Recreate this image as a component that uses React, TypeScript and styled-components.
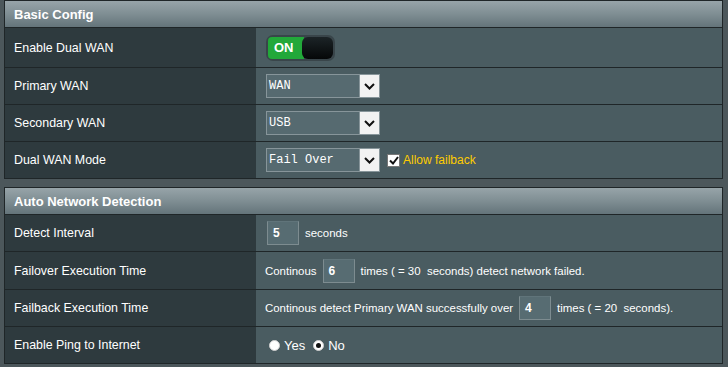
import styled, { createGlobalStyle } from 'styled-components';

const GlobalStyle = createGlobalStyle`
  html, body {
    margin: 0;
    padding: 0;
    background: #4c575b;
    font-family: "Liberation Sans", Arial, sans-serif;
  }
`;

const Page = styled.div`
  padding: 0 5px 0 4px;
  display: flex;
  flex-direction: column;
  gap: 8px;
`;

const Section = styled.section`
  border: 1px solid #1f2628;
  display: flex;
  flex-direction: column;
`;

const Header = styled.div`
  height: 26px;
  display: flex;
  align-items: center;
  padding-left: 9px;
  background: linear-gradient(to bottom, #97a4a9 0%, #7f8e93 50%, #64747a 100%);
  color: #ffffff;
  font-size: 13px;
  font-weight: bold;
  border-bottom: 1px solid #1f2628;
`;

const Row = styled.div<{ $h?: number; $last?: boolean }>`
  display: grid;
  grid-template-columns: 251px 1fr;
  height: ${p => p.$h ?? 36}px;
  border-bottom: ${p => (p.$last ? 'none' : '1px solid #1f2628')};
`;

const Label = styled.div`
  background: #2e3a3e;
  color: #ffffff;
  font-size: 12.4px;
  display: flex;
  align-items: center;
  padding-left: 9px;
`;

const Value = styled.div`
  background: #4a5c61;
  color: #ffffff;
  font-size: 11.45px;
  display: flex;
  align-items: center;
  padding-left: 9px;
  white-space: pre;
`;

const Toggle = styled.div`
  width: 69px;
  height: 26px;
  margin-left: 1px;
  box-sizing: border-box;
  border-radius: 7px;
  background: #39454a;
  padding: 2px;
  display: flex;
`;

const ToggleOn = styled.div`
  width: 36px;
  background: #22a83a;
  border-radius: 4px 0 0 4px;
  color: #fff;
  font-weight: bold;
  font-size: 13px;
  display: flex;
  align-items: center;
  padding-left: 6px;
  box-sizing: border-box;
`;

const ToggleKnob = styled.div`
  flex: 1;
  background: linear-gradient(to bottom, #1c2427, #050708);
  border-radius: 6px;
  margin-left: -2px;
`;

const Select = styled.div`
  width: 114px;
  height: 24px;
  margin-left: 1px;
  box-sizing: border-box;
  border: 1px solid #87959a;
  background: #566a70;
  display: flex;
  align-items: stretch;
`;

const SelectText = styled.span`
  flex: 1;
  display: flex;
  align-items: center;
  padding-left: 2px;
  font-family: "Liberation Mono", "Courier New", monospace;
  font-size: 12px;
  color: #ffffff;
`;

const Arrow = styled.span`
  width: 19px;
  background: #f2f2f2;
  border-left: 1px solid #87959a;
  display: flex;
  align-items: center;
  justify-content: center;
`;

const Check = styled.span`
  width: 11px;
  height: 11px;
  margin: 0 3px 0 7px;
  background: #ffffff;
  border: 1px solid #777;
  display: flex;
  align-items: center;
  justify-content: center;
`;

const Yellow = styled.span`
  color: #ffcc00;
  font-size: 12px;
`;

const NumBox = styled.span<{ $first?: boolean }>`
  width: 32px;
  height: 24px;
  box-sizing: border-box;
  border: 1px solid #7d8c90;
  border-top-color: #60747a;
  background: #576c72;
  color: #fff;
  font-weight: bold;
  font-size: 12px;
  display: inline-flex;
  align-items: center;
  padding-left: 5px;
  margin: 0 6px 0 ${p => (p.$first ? 2 : 6)}px;
`;

const Radio = styled.span<{ $on?: boolean }>`
  width: 11px;
  height: 11px;
  border-radius: 50%;
  background: #ffffff;
  border: 1px solid #d0d0d0;
  box-sizing: border-box;
  display: inline-flex;
  align-items: center;
  justify-content: center;
  margin: 0 4px 0 4px;

  &::after {
    content: '';
    width: 5px;
    height: 5px;
    border-radius: 50%;
    background: ${p => (p.$on ? '#111' : 'transparent')};
  }
`;

const RadioText = styled.span`
  font-size: 13px;
  margin-right: 4px;
`;

const Chevron = () => (
  <svg width="11" height="7" viewBox="0 0 11 7">
    <path d="M1 1 L5.5 5.5 L10 1" fill="none" stroke="#111" strokeWidth="2" />
  </svg>
);

const Dropdown = ({ value }: { value: string }) => (
  <Select>
    <SelectText>{value}</SelectText>
    <Arrow>
      <Chevron />
    </Arrow>
  </Select>
);

export default function App() {
  return (
    <Page>
      <GlobalStyle />
      <Section>
        <Header>Basic Config</Header>
        <Row $h={39}>
          <Label>Enable Dual WAN</Label>
          <Value>
            <Toggle>
              <ToggleOn>ON</ToggleOn>
              <ToggleKnob />
            </Toggle>
          </Value>
        </Row>
        <Row>
          <Label>Primary WAN</Label>
          <Value>
            <Dropdown value="WAN" />
          </Value>
        </Row>
        <Row>
          <Label>Secondary WAN</Label>
          <Value>
            <Dropdown value="USB" />
          </Value>
        </Row>
        <Row $last>
          <Label>Dual WAN Mode</Label>
          <Value>
            <Dropdown value="Fail Over" />
            <Check>
              <svg width="10" height="9" viewBox="0 0 10 9">
                <path d="M1 4.5 L4 7.5 L9 1" fill="none" stroke="#111" strokeWidth="2" />
              </svg>
            </Check>
            <Yellow>Allow failback</Yellow>
          </Value>
        </Row>
      </Section>

      <Section>
        <Header>Auto Network Detection</Header>
        <Row>
          <Label>Detect Interval</Label>
          <Value>
            <NumBox $first>5</NumBox>seconds
          </Value>
        </Row>
        <Row $h={37}>
          <Label>Failover Execution Time</Label>
          <Value>
            Continous<NumBox>6</NumBox>times ( = 30  seconds) detect network failed.
          </Value>
        </Row>
        <Row>
          <Label>Failback Execution Time</Label>
          <Value>
            Continous detect Primary WAN successfully over<NumBox>4</NumBox>times ( = 20  seconds).
          </Value>
        </Row>
        <Row $last>
          <Label>Enable Ping to Internet</Label>
          <Value>
            <Radio />
            <RadioText>Yes</RadioText>
            <Radio $on />
            <RadioText>No</RadioText>
          </Value>
        </Row>
      </Section>
    </Page>
  );
}
